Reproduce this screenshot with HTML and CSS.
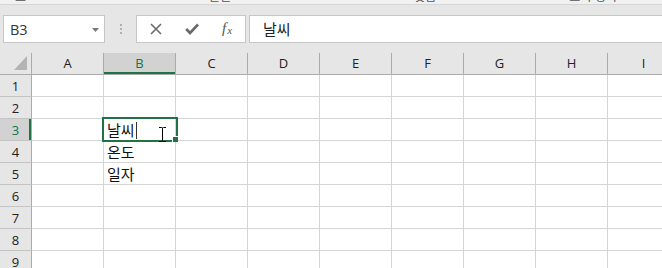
FILE: index.html
```html
<!DOCTYPE html>
<html lang="ko">
<head>
<meta charset="utf-8">
<link rel="stylesheet" href="styles.css">
</head>
<body>
<div class="app">
  <div class="ribbon-tail">
    <span class="rl rl1">보드</span>
    <span class="rl rl2">글꼴</span>
    <span class="rl rl3">맞춤</span>
    <span class="rl rl4">표시 형식</span>
  </div>
  <div class="fbar">
    <div class="namebox">
      <span class="nb-text">B3</span>
      <svg class="nb-arrow" width="7" height="4" viewBox="0 0 7 4"><polygon points="0,0 7,0 3.5,4" fill="#7a7a7a"/></svg>
    </div>
    <div class="grip"><i></i><i></i><i></i></div>
    <div class="fbtns">
      <svg width="12" height="12" viewBox="0 0 12 12"><path d="M1 1 L11 11 M11 1 L1 11" stroke="#6b6b6b" stroke-width="1.6" fill="none"/></svg>
      <svg width="14" height="12" viewBox="0 0 14 12"><path d="M1.2 6 L5 10 L13 1.5" stroke="#6b6b6b" stroke-width="2.6" fill="none"/></svg>
      <span class="fx">f<sub>x</sub></span>
    </div>
    <div class="finput">날씨</div>
  </div>
  <div class="sheet">
    <div class="corner"><svg width="31" height="21" viewBox="0 0 31 21"><polygon points="14,17 27,17 27,3" fill="#b4b4b4"/></svg></div>
    <div class="ch">A</div><div class="ch ch-sel">B</div><div class="ch">C</div><div class="ch">D</div><div class="ch">E</div><div class="ch">F</div><div class="ch">G</div><div class="ch">H</div><div class="ch">I</div>

    <div class="rh">1</div><div class="c"></div><div class="c"></div><div class="c"></div><div class="c"></div><div class="c"></div><div class="c"></div><div class="c"></div><div class="c"></div><div class="c"></div>
    <div class="rh">2</div><div class="c"></div><div class="c"></div><div class="c"></div><div class="c"></div><div class="c"></div><div class="c"></div><div class="c"></div><div class="c"></div><div class="c"></div>
    <div class="rh rh-sel">3</div><div class="c"></div>
    <div class="c active">날씨<span class="caret"></span>
      <div class="sel"></div><div class="handle"></div>
      <svg class="ibeam" width="9" height="15" viewBox="0 0 9 15"><path d="M1 0.5 H3.5 Q4.5 0.5 4.5 1.5 Q4.5 0.5 5.5 0.5 H8 M4.5 1.5 V13.5 M1 14.5 H3.5 Q4.5 14.5 4.5 13.5 Q4.5 14.5 5.5 14.5 H8" stroke="#000" stroke-width="1" fill="none"/></svg>
    </div>
    <div class="c"></div><div class="c"></div><div class="c"></div><div class="c"></div><div class="c"></div><div class="c"></div><div class="c"></div>
    <div class="rh">4</div><div class="c"></div><div class="c">온도</div><div class="c"></div><div class="c"></div><div class="c"></div><div class="c"></div><div class="c"></div><div class="c"></div><div class="c"></div>
    <div class="rh">5</div><div class="c"></div><div class="c">일자</div><div class="c"></div><div class="c"></div><div class="c"></div><div class="c"></div><div class="c"></div><div class="c"></div><div class="c"></div>
    <div class="rh">6</div><div class="c"></div><div class="c"></div><div class="c"></div><div class="c"></div><div class="c"></div><div class="c"></div><div class="c"></div><div class="c"></div><div class="c"></div>
    <div class="rh">7</div><div class="c"></div><div class="c"></div><div class="c"></div><div class="c"></div><div class="c"></div><div class="c"></div><div class="c"></div><div class="c"></div><div class="c"></div>
    <div class="rh">8</div><div class="c"></div><div class="c"></div><div class="c"></div><div class="c"></div><div class="c"></div><div class="c"></div><div class="c"></div><div class="c"></div><div class="c"></div>
    <div class="rh">9</div><div class="c"></div><div class="c"></div><div class="c"></div><div class="c"></div><div class="c"></div><div class="c"></div><div class="c"></div><div class="c"></div><div class="c"></div>
  </div>
</div>
</body>
</html>
```
FILE: styles.css
```css
* { box-sizing: border-box; }
html, body { margin: 0; padding: 0; }
body {
  width: 662px;
  height: 268px;
  overflow: hidden;
  background: #e6e6e6;
  font-family: "Noto Sans CJK KR", "Open Sans", sans-serif;
}
.app { width: 662px; height: 268px; overflow: hidden; }

.ribbon-tail {
  height: 5px;
  background: #f1f1f1;
  border-bottom: 1px solid #d6d6d6;
  overflow: hidden;
  display: flex;
  font-size: 12px;
  line-height: 12px;
  color: #555;
}
.rl { margin-top: -10px; white-space: nowrap; }
.rl1 { margin-left: 15px; }
.rl2 { margin-left: 172px; }
.rl3 { margin-left: 183px; }
.rl4 { margin-left: 133px; }

.fbar {
  display: flex;
  padding: 10px 0 10px 3px;
  height: 48px;
}
.namebox {
  width: 102px;
  height: 28px;
  background: #fff;
  border: 1px solid #c6c6c6;
  display: flex;
  align-items: center;
  padding: 0 5px 0 6px;
  font-family: "Open Sans", sans-serif;
  font-size: 14.5px;
  color: #333;
}
.nb-arrow { margin-left: auto; margin-top: 1px; }
.grip {
  width: 31px;
  display: flex;
  flex-direction: column;
  align-items: center;
  justify-content: center;
  gap: 2px;
}
.grip i { width: 2px; height: 2px; background: #b0b0b0; display: block; }
.fbtns {
  width: 110px;
  height: 28px;
  background: #fff;
  border: 1px solid #c6c6c6;
  display: flex;
  align-items: center;
  padding-left: 13px;
  gap: 23px;
}
.fx {
  font-family: "Liberation Serif", serif;
  font-style: italic;
  font-size: 15px;
  color: #555;
  line-height: 1;
  margin-top: -2px;
}
.fx sub { font-size: 11px; vertical-align: -1px; margin-left: 1px; }
.finput {
  flex: 1;
  height: 28px;
  margin-left: 3px;
  background: #fff;
  border: 1px solid #c6c6c6;
  border-right: none;
  padding-left: 13px;
  font-size: 15px;
  line-height: 25px;
  color: #222;
}

.sheet {
  display: grid;
  grid-template-columns: 32px repeat(9, 72px);
  grid-auto-rows: 22px;
}
.corner {
  border-right: 1px solid #ababab;
  border-bottom: 1px solid #ababab;
}
.corner svg { display: block; }
.ch {
  border-right: 1px solid #ababab;
  border-bottom: 1px solid #ababab;
  font-family: "Open Sans", sans-serif;
  font-size: 13px;
  line-height: 21px;
  text-align: center;
  color: #222;
}
.ch-sel {
  background: #d2d2d2;
  color: #217346;
  box-shadow: inset 0 -2px 0 #217346;
}
.rh {
  border-right: 1px solid #ababab;
  border-bottom: 1px solid #c4c4c4;
  font-family: "Open Sans", sans-serif;
  font-size: 13px;
  line-height: 22px;
  text-align: center;
  color: #222;
}
.rh-sel {
  background: #d2d2d2;
  color: #217346;
  box-shadow: inset -2px 0 0 #217346;
}
.c {
  background: #fff;
  border-right: 1px solid #d4d4d4;
  border-bottom: 1px solid #d4d4d4;
  font-size: 15px;
  line-height: 21px;
  padding-left: 3px;
  color: #111;
  white-space: nowrap;
}
.active { position: relative; }
.caret {
  display: inline-block;
  width: 1px;
  height: 17px;
  background: #333;
  vertical-align: -3px;
  margin-left: 1px;
}
.sel {
  position: absolute;
  left: -2px;
  top: -2px;
  right: -3px;
  bottom: -2px;
  border: 2px solid #217346;
  pointer-events: none;
}
.handle {
  position: absolute;
  right: -3px;
  bottom: -2px;
  width: 6px;
  height: 6px;
  background: #217346;
  border-left: 1px solid #fff;
  border-top: 1px solid #fff;
}
.ibeam {
  position: absolute;
  left: 54px;
  top: 8px;
}
```
